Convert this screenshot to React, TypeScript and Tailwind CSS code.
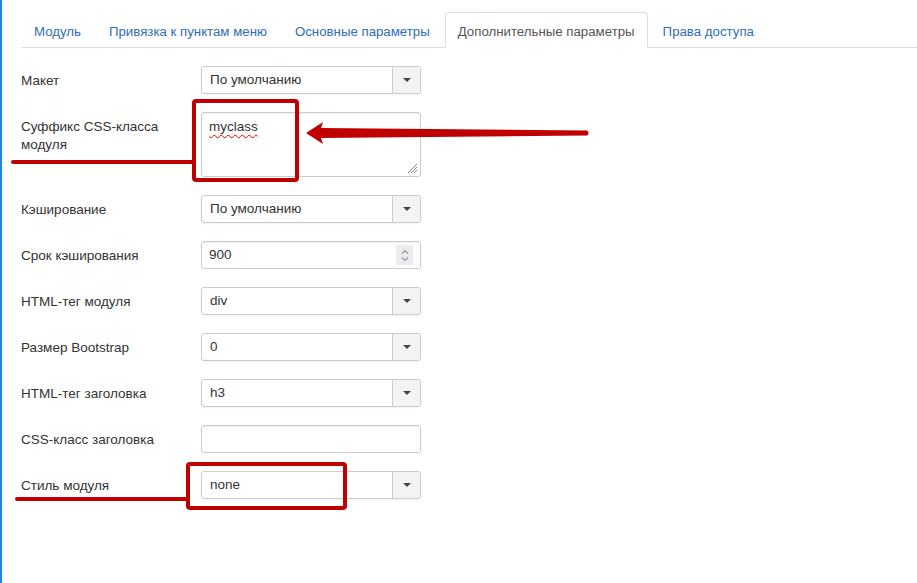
import React from 'react';

const tabs = ['Модуль', 'Привязка к пунктам меню', 'Основные параметры', 'Дополнительные параметры', 'Права доступа'];
const activeTab = 3;

const Caret = () => (
  <svg width="8" height="4" viewBox="0 0 8 4" className="fill-[#444]">
    <path d="M0 0h8L4 4z" />
  </svg>
);

const Select: React.FC<{ value: string }> = ({ value }) => (
  <div className="flex h-[28px] w-[220px] items-stretch rounded-[3px] border border-[#ccc] bg-white shadow-[0_1px_2px_rgba(0,0,0,0.05)]">
    <div className="flex flex-1 items-center px-[8px] text-[13.5px] text-[#333]">{value}</div>
    <div className="flex w-[28px] items-center justify-center border-l border-[#ccc] bg-[#f3f3f3] rounded-r-[3px]">
      <Caret />
    </div>
  </div>
);

const TextInput: React.FC<{ value?: string; spinner?: boolean }> = ({ value = '', spinner }) => (
  <div className="flex h-[28px] w-[220px] items-center rounded-[3px] border border-[#ccc] bg-white px-[7px] text-[13.5px] text-[#333] shadow-[inset_0_1px_1px_rgba(0,0,0,0.06)]">
    <span className="flex-1">{value}</span>
    {spinner && (
      <div className="flex h-[20px] w-[17px] flex-col items-center justify-center gap-[3px] bg-[#ececf0]">
        <svg width="8" height="5" viewBox="0 0 8 5" fill="none" stroke="#999" strokeWidth="1.2">
          <path d="M1 4.5 4 1.5 7 4.5" />
        </svg>
        <svg width="8" height="5" viewBox="0 0 8 5" fill="none" stroke="#999" strokeWidth="1.2">
          <path d="M1 0.5 4 3.5 7 0.5" />
        </svg>
      </div>
    )}
  </div>
);

const Row: React.FC<{ label: string; children: React.ReactNode }> = ({ label, children }) => (
  <div className="mb-[18px] flex">
    <label className="mr-[20px] w-[160px] pt-[6px] text-[13.5px] leading-[18px] text-[#333]">{label}</label>
    {children}
  </div>
);

export default function App() {
  return (
    <div
      className="relative h-[583px] w-[917px] overflow-hidden border-l-2 border-[#1e88e5] bg-white"
      style={{ fontFamily: '"Liberation Sans", Arial, sans-serif' }}
    >
      <div className="pl-[19px] pt-[12px]">
        <ul className="flex border-b border-[#ddd]">
          {tabs.map((t, i) => (
            <li key={t} className="mr-[2px] -mb-px">
              <span
                className={
                  i === activeTab
                    ? 'block rounded-t-[4px] border border-[#ddd] border-b-white bg-white px-[12px] pt-[10px] pb-[6px] text-[13.25px] leading-[18px] text-[#555]'
                    : 'block border border-transparent px-[12px] pt-[10px] pb-[6px] text-[13.25px] leading-[18px] text-[#2f6db5]'
                }
              >
                {t}
              </span>
            </li>
          ))}
        </ul>

        <div className="pt-[18px]">
          <Row label="Макет">
            <Select value="По умолчанию" />
          </Row>
          <Row label="Суффикс CSS-класса модуля">
            <div className="relative h-[65px] w-[220px] rounded-[3px] border border-[#ccc] bg-white px-[7px] pt-[5px] text-[13.5px] leading-[18px] text-[#333] shadow-[inset_0_1px_1px_rgba(0,0,0,0.06)]">
              <span className="underline decoration-wavy decoration-[#e00] decoration-1 underline-offset-[3px]">myclass</span>
              <svg width="12" height="12" viewBox="0 0 12 12" className="absolute bottom-[2px] right-[2px]" stroke="#888" strokeWidth="1">
                <path d="M11 2 2 11M11 5 5 11M11 8 8 11" />
              </svg>
            </div>
          </Row>
          <Row label="Кэширование">
            <Select value="По умолчанию" />
          </Row>
          <Row label="Срок кэширования">
            <TextInput value="900" spinner />
          </Row>
          <Row label="HTML-тег модуля">
            <Select value="div" />
          </Row>
          <Row label="Размер Bootstrap">
            <Select value="0" />
          </Row>
          <Row label="HTML-тег заголовка">
            <Select value="h3" />
          </Row>
          <Row label="CSS-класс заголовка">
            <TextInput />
          </Row>
          <Row label="Стиль модуля">
            <Select value="none" />
          </Row>
        </div>
      </div>

      {/* red annotations */}
      <svg className="pointer-events-none absolute left-[-2px] top-0" width="917" height="583" viewBox="0 0 917 583">
        <g fill="none" stroke="#c00000" strokeWidth="4" strokeLinecap="round" strokeLinejoin="round">
          <rect x="194" y="101" width="103" height="79" rx="2" />
          <rect x="188" y="464" width="157" height="44" rx="2" />
          <path d="M13 162H194" />
          <path d="M17 499H186" />
        </g>
        <polygon fill="#c00000" points="306,133 323,122 321,128 586,130.5 586,135.5 321,138 323,144" />
        <circle cx="586" cy="133" r="2.5" fill="#c00000" />
      </svg>
    </div>
  );
}
